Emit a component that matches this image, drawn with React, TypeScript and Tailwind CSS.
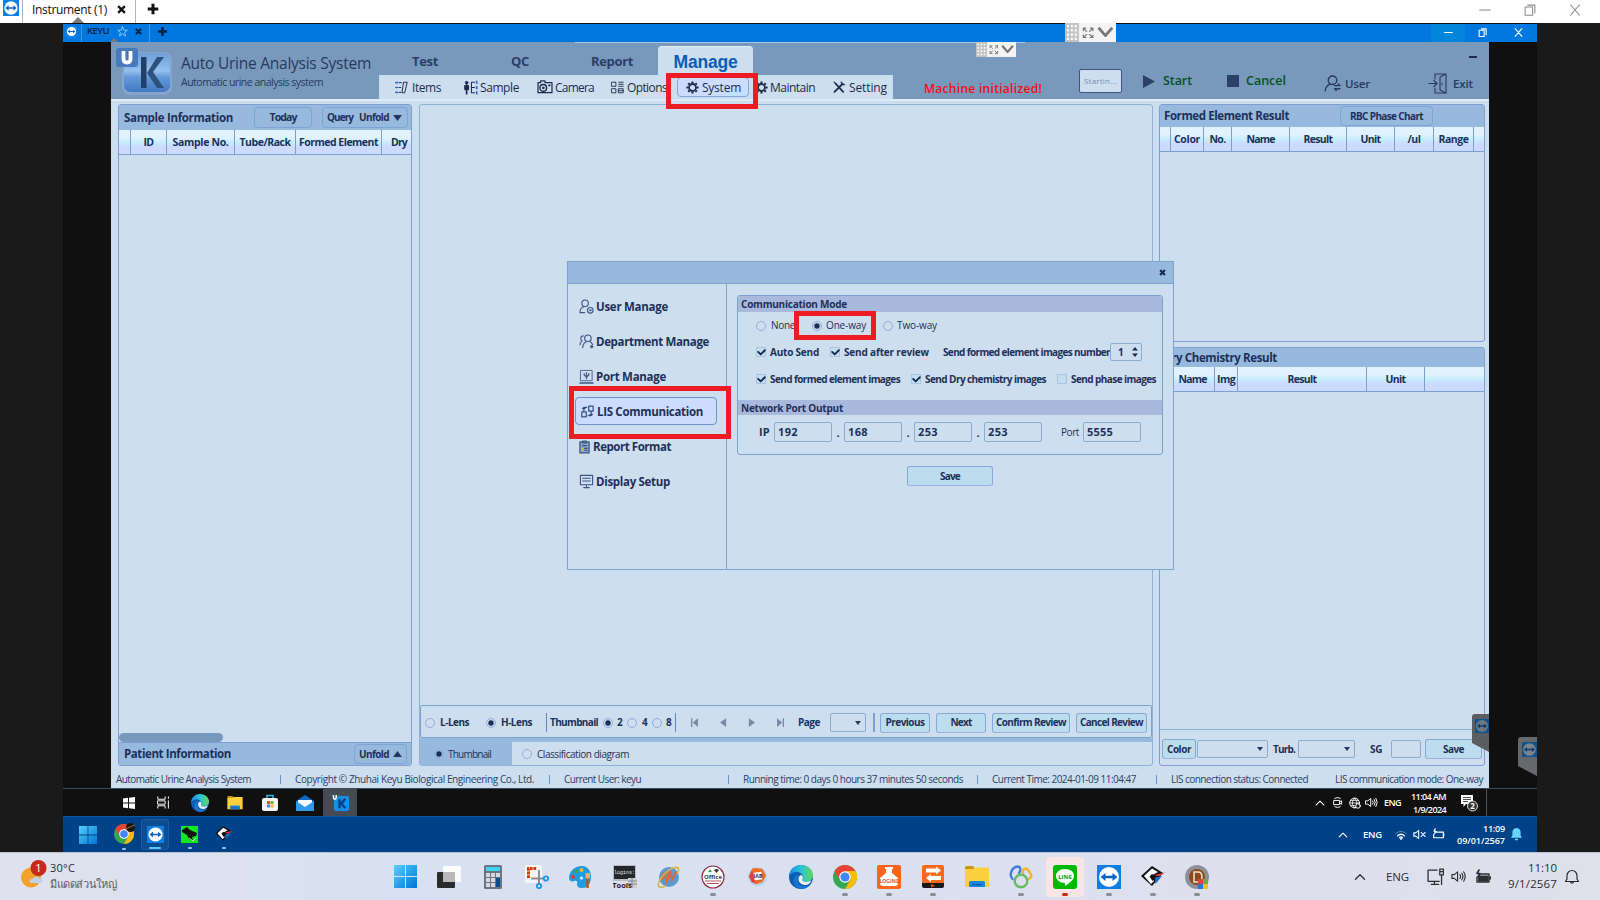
import React, { useLayoutEffect, useRef } from "react";

/* Text set to the exact width of its box by spreading the letter spacing. */
function Fit({ className = "", children }: { className?: string; children: string }) {
  const box = useRef<HTMLSpanElement>(null);
  const inner = useRef<HTMLSpanElement>(null);
  useLayoutEffect(() => {
    if (!box.current || !inner.current) return;
    inner.current.style.letterSpacing = "0px";
    const gap = box.current.getBoundingClientRect().width - inner.current.getBoundingClientRect().width;
    inner.current.style.letterSpacing = `${gap / children.length}px`;
  }, [children]);
  return (
    <span ref={box} className={`block shrink-0 whitespace-nowrap ${className}`}>
      <span ref={inner}>{children}</span>
    </span>
  );
}

type IconProps = { className?: string };
type SvgProps = { className?: string; box?: string; children: React.ReactNode };
function Svg({ className = "", box = "0 0 16 16", children }: SvgProps) {
  return (
    <svg viewBox={box} fill="none" stroke="currentColor" strokeLinecap="round" strokeLinejoin="round" className={`block shrink-0 ${className}`}>
      {children}
    </svg>
  );
}

function Chevron({ className = "" }: IconProps) {
  return (
    <Svg className={className}>
      <path d="M2 11l6-6 6 6" strokeWidth="1.8" />
    </Svg>
  );
}

function Gear({ className = "" }: IconProps) {
  return (
    <Svg className={className}>
      <circle cx="8" cy="8" r="4.3" strokeWidth="2.2" />
      <path d="M8 .5v2.500M8 13v2.500M.5 8H3M13 8h2.500M2.700 2.700l1.700 1.700M11.600 11.600l1.700 1.700M13.300 2.700l-1.700 1.700M4.400 11.600l-1.700 1.700" strokeWidth="2.600" strokeLinecap="butt" />
    </Svg>
  );
}

function TeamViewer({ className = "" }: IconProps) {
  return (
    <svg viewBox="0 0 24 24" className={`block shrink-0 ${className}`}>
      <rect width="24" height="24" fill="#0e7fe0" />
      <circle cx="12" cy="12" r="10" fill="#fff" />
      <path d="M3.500 12l5-4v2.800h7V8l5 4-5 4v-2.800h-7V16z" fill="#0b64c4" />
    </svg>
  );
}

function Windows({ className = "" }: IconProps) {
  return (
    <svg viewBox="0 0 23 23" className={`block shrink-0 ${className}`}>
      <defs>
        <linearGradient id="winfill" x1="0" y1="0" x2="23" y2="23" gradientUnits="userSpaceOnUse">
          <stop offset="0" stopColor="#52d3fb" />
          <stop offset="1" stopColor="#0073d4" />
        </linearGradient>
      </defs>
      <path d="M0 0h11v11H0zM12 0h11v11H12zM0 12h11v11H0zM12 12h11v11H12z" fill="url(#winfill)" />
    </svg>
  );
}

function Chrome({ className = "" }: IconProps) {
  return (
    <svg viewBox="0 0 24 24" className={`block shrink-0 ${className}`}>
      <circle cx="12" cy="12" r="12" fill="#34a853" />
      <path d="M12 0a12 12 0 0 1 10.400 6H12L6.800 15 1.600 6A12 12 0 0 1 12 0z" fill="#ea4335" />
      <path d="M22.400 6A12 12 0 0 1 12 24l5.200-9L17 9l-5-3z" fill="#fbbc05" />
      <circle cx="12" cy="12" r="5.800" fill="#fff" />
      <circle cx="12" cy="12" r="4.600" fill="#4285f4" />
    </svg>
  );
}

function Edge({ className = "" }: IconProps) {
  return (
    <svg viewBox="0 0 24 24" className={`block shrink-0 ${className}`}>
      <defs>
        <linearGradient id="edgetop" x1="0" y1="8" x2="24" y2="8" gradientUnits="userSpaceOnUse">
          <stop offset="0" stopColor="#1d8be0" />
          <stop offset="0.500" stopColor="#2bc3d8" />
          <stop offset="1" stopColor="#62d857" />
        </linearGradient>
      </defs>
      <circle cx="12" cy="12" r="12" fill="#0f5db5" />
      <path d="M0 11C1 4 6 0 12 0c7 0 12 5 12 10 0 4-3 6.500-6.500 6.500-3 0-4.500-1-4-2 1-1.500 1-2.500.5-3.500C13 8.500 10.500 7 7.500 7 4 7 1 9 0 11z" fill="url(#edgetop)" />
      <path d="M9 12c-2 4 0 9 6 9.500 3 .2 5.500-1 7-3C20 22 16.500 24 12 24 6 23 4 18 5 14c.6-2.500 2.500-4 4.500-4.500z" fill="#1679cf" />
      <path d="M9.500 14c0-2.500 1.500-4 3-4 1.500 1 2 3 .9 4.500-.6 1 .9 2.200 4 2.200 2 0 3.600-.6 5-1.700-1 3.500-3 5-6 5-4 0-6.900-2.500-6.900-6z" fill="#e4eef8" />
    </svg>
  );
}

function Folder({ className = "" }: IconProps) {
  return (
    <svg viewBox="0 0 24 22" className={`block shrink-0 ${className}`}>
      <path d="M0 1.500Q0 0 1.500 0H8l2 3H0z" fill="#c89412" />
      <path d="M0 3h8l2-1.500h14V21H0z" fill="#fccf3d" />
      <path d="M4 21v-4.500Q4 15 5.500 15h13q1.500 0 1.500 1.500V21z" fill="#1c86d8" />
      <path d="M7 18h10v1.300H7z" fill="#0a5ba8" />
    </svg>
  );
}

function Diamond({ className = "" }: IconProps) {
  return (
    <svg viewBox="0 0 24 22" className={`block shrink-0 ${className}`}>
      <path d="M11 0l11 7-11 13L0 10z" fill="#111" />
      <path d="M11 2.500L17 6 9.500 10l3.500 5-3 3-7-8z" fill="#fff" />
      <path d="M11 8l4 3-3.500 4-3-4.500z" fill="#111" />
      <path d="M13 9l11-2.500-6 4z" fill="#e2353f" />
      <path d="M14 11.500l7-1.500-6.500 8z" fill="#1f6fc4" />
    </svg>
  );
}

function KLogo({ className = "" }: IconProps) {
  return (
    <svg viewBox="0 0 56 48" className={`block shrink-0 ${className}`}>
      <defs>
        <linearGradient id="klogo" x1="0" y1="5" x2="0" y2="47" gradientUnits="userSpaceOnUse">
          <stop offset="0" stopColor="#6f9cd6" />
          <stop offset="0.450" stopColor="#93c0ec" />
          <stop offset="0.600" stopColor="#6499d8" />
          <stop offset="1" stopColor="#3d74c2" />
        </linearGradient>
      </defs>
      <rect x="6" y="5" width="50" height="43" rx="8" fill="#86a4cc" />
      <rect x="8" y="6" width="46" height="39" rx="7" fill="url(#klogo)" />
      <path d="M25 10h5.500v31H25z" fill="#1f4068" />
      <path d="M41 10h7L37 25l11 16h-7L31 26z" fill="#2c527d" />
      <rect x="0" y="1" width="22" height="19" rx="3" fill="#4879bb" />
      <path d="M7.500 4v8q0 3.500 3.500 3.500t3.500-3.500V4" fill="none" stroke="#fff" strokeWidth="3.800" />
    </svg>
  );
}

function Radio({ on = false, className = "" }: { on?: boolean; className?: string }) {
  return (
    <svg viewBox="0 0 10 10" className={`block size-[10px] shrink-0 ${className}`}>
      <circle cx="5" cy="5" r="4.500" fill="none" stroke="#8fabd9" />
      {on && <circle cx="5" cy="5" r="2.700" fill="#1a2e57" />}
    </svg>
  );
}

function Check({ on = true, className = "" }: { on?: boolean; className?: string }) {
  return (
    <span className={`flex size-[10px] shrink-0 items-center justify-center border border-[#a9c5e2] bg-[#c3dcee] ${className}`}>
      {on && (
        <Svg className="size-[9px] text-[#14284e]">
          <path d="M2 7l4.500 4.500L14 4" strokeWidth="3.200" />
        </Svg>
      )}
    </span>
  );
}

const btn = "flex shrink-0 items-center justify-center rounded-[3px] border border-[#87a9d6] border-b-[#9cafe0] bg-[#bcdded]";
const ghost = "flex shrink-0 items-center rounded-[4px] border border-[#7fa3d3]";
const field = "flex shrink-0 items-center rounded-[2px] border border-[#8badd0]";
const thead = "flex shrink-0 border-b border-[#7b9fd0] bg-linear-to-b from-[#e2f2ff] from-30% via-[#c6eeff] via-50% to-[#ccdaff] to-70% text-[10.500px] font-bold";
const th = "flex shrink-0 items-center justify-center border-r border-[#7b9fcb] pt-[2px]";

function Caret({ className = "" }: IconProps) {
  return (
    <svg viewBox="0 0 10 6" preserveAspectRatio="none" className={`block shrink-0 ${className}`}>
      <path d="M0 0h10L5 6z" fill="#223763" />
    </svg>
  );
}

function FloatTool({ className = "" }: IconProps) {
  return (
    <div className={`absolute flex items-center bg-[#f3f3f3] text-[#777] ${className}`}>
      <svg viewBox="0 0 14 18" className="h-full w-[27%] bg-[#c4c4c4]" preserveAspectRatio="none">
        <path d="M2 3h2M6 3h2M10 3h2M2 7h2M6 7h2M10 7h2M2 11h2M6 11h2M10 11h2M2 15h2M6 15h2M10 15h2" stroke="#fff" strokeWidth="2" />
      </svg>
      <Svg className="mx-[6%] h-[62%] w-[24%]">
        <path d="M10 6l4.500-4.500M11 1.500h3.500V5M6 6L1.500 1.500M5 1.500H1.500V5M10 10l4.500 4.500M11 14.500h3.500V11M6 10l-4.500 4.500M5 14.500H1.500V11" strokeWidth="1.600" />
      </Svg>
      <Svg className="h-full w-[33%]">
        <path d="M1.500 3.500L8 11l6.500-7.500" strokeWidth="2.600" strokeLinecap="butt" />
      </Svg>
    </div>
  );
}

function AppHeader() {
  return (
    <div className="flex h-[57px] shrink-0 border-t border-[#8098b8] bg-[#7899bc] text-[#263a60]">
      <KLogo className="mt-[4px] ml-[5px] h-[48px] w-[56px]" />
      <div className="ml-[9px] w-[198px]">
        <Fit className="mt-[9px] w-[190px] text-[15.500px] leading-[22px]">Auto Urine Analysis System</Fit>
        <Fit className="mt-px w-[142px] text-[10.500px] leading-[15px]">Automatic urine analysis system</Fit>
      </div>
      <div className="w-[514px] shrink-0">
        <div className="flex h-[32px] items-center text-[13px] font-bold text-[#2b3f66]">
          <Fit className="ml-[33px] w-[26px] pt-[5px]">Test</Fit>
          <Fit className="ml-[73px] w-[18px] pt-[5px]">QC</Fit>
          <Fit className="ml-[62px] w-[42px] pt-[5px]">Report</Fit>
          <div className="ml-[25px] flex h-[29px] w-[95px] items-center justify-center self-end rounded-t-[4px] border-t border-[#e0f0fa] bg-[#cddeee] pt-[2px]">
            <Fit className="w-[64px] font-['Liberation_Sans'] text-[17.500px] font-bold text-[#0b5cb8]">Manage</Fit>
          </div>
        </div>
        <div className="flex h-[24px] items-center border border-[#bfe0f2] bg-[#cddeee] text-[12px] text-[#1c2c4e]">
          <Svg className="ml-[15px] h-[13px] w-[13px]">
            <path d="M1 2h2M1 8h2M1 14h2" stroke="#3d66cc" strokeWidth="2" />
            <path d="M5 2h3M5 8h2M5 14h2M11 1.500h4L12 14.500H9z" strokeWidth="1.200" />
          </Svg>
          <Fit className="ml-[4px] w-[29px] pt-px">Items</Fit>
          <Svg className="ml-[23px] h-[15px] w-[14px]">
            <circle cx="3" cy="2.500" r="1.500" fill="currentColor" />
            <path d="M3 5v10M1.200 6v4M4.800 6v4" strokeWidth="2" />
            <path d="M12 2H8.500v12H12M8.500 8H12" strokeWidth="1.200" />
            <path d="M14.500 1v2M14.500 7v2M14.500 13v2" stroke="#3d66cc" strokeWidth="2" />
          </Svg>
          <Fit className="ml-[2px] w-[39px] pt-px">Sample</Fit>
          <Svg box="0 0 18 16" className="ml-[18px] h-[14px] w-[16px]">
            <path d="M1 3h3V1h5v2h8v11.500H1z" strokeWidth="1.400" />
            <circle cx="7" cy="9" r="3.800" strokeWidth="1.600" />
            <circle cx="7" cy="9" r="1" fill="currentColor" />
            <path d="M13.500 6h1" strokeWidth="2" />
          </Svg>
          <Fit className="ml-[2px] w-[39px] pt-px">Camera</Fit>
          <Svg className="ml-[17px] h-[13px] w-[13px]">
            <path d="M1 1.500h5v5H1zM1 9.500h5v5H1zM9.500 1.500H15M9.500 4H15M9.500 6.500H15M9.500 9.500H15v5H9.500zM9.500 12H15" strokeWidth="1.100" />
          </Svg>
          <Fit className="ml-[3px] w-[40px] pt-px">Options</Fit>
          <div className="ml-[10px] flex h-[20px] w-[72px] items-center rounded-[4px] border border-[#88a5d8] bg-[#ccdcff]">
            <Gear className="ml-[8px] size-[13px]" />
            <Fit className="ml-[3px] w-[39px] pt-px">System</Fit>
          </div>
          <Gear className="ml-[6px] size-[13px]" />
          <Fit className="ml-[2px] w-[45px] pt-px">Maintain</Fit>
          <Svg className="ml-[18px] size-[12px]">
            <path d="M2 14.500L12.500 4M4 4l9.500 10.500" strokeWidth="2.400" />
            <path d="M1.500 1.500L4 4M11 1.500L12.500 4l2.500 1" strokeWidth="1.800" />
          </Svg>
          <Fit className="ml-[4px] w-[38px] pt-px">Setting</Fit>
        </div>
      </div>
      <div className="flex flex-1 items-start">
        <Fit className="mt-[36px] ml-[31px] w-[118px] text-[12px] leading-[20px] font-semibold text-[#f40d18]">Machine initialized!</Fit>
        <div className="mt-[26px] ml-[37px] flex h-[24px] w-[43px] items-center justify-center rounded-[2px] border border-[#3b5482] bg-[#cddeee]">
          <Fit className="w-[33px] text-[8px] text-[#7790b8]">Startin...</Fit>
        </div>
        <svg viewBox="0 0 12 13" className="mt-[32px] ml-[21px] h-[13px] w-[12px]">
          <path d="M0 0l12 6.500L0 13z" fill="#2d4068" />
        </svg>
        <Fit className="mt-[28px] ml-[8px] w-[29px] text-[12.500px] leading-[20px] font-semibold text-[#07501f]">Start</Fit>
        <div className="mt-[32px] ml-[35px] size-[12px] bg-[#2d4068]" />
        <Fit className="mt-[28px] ml-[7px] w-[40px] text-[12.500px] leading-[20px] font-semibold text-[#07501f]">Cancel</Fit>
        <Svg className="mt-[32px] ml-[38px] size-[17px]">
          <circle cx="8" cy="5" r="4" strokeWidth="1.300" />
          <path d="M1 15c.5-3 2-5.500 4.500-6.500M10 10h5M13.500 8.500L15 10M15 13h-5M11.500 14.500L10 13" strokeWidth="1.300" />
        </Svg>
        <Fit className="mt-[31px] ml-[4px] w-[25px] text-[11.500px] leading-[20px] font-semibold">User</Fit>
        <Svg box="0 0 19 21" className="mt-[30px] ml-[58px] h-[21px] w-[19px]">
          <path d="M7 6V1h11v19H7v-5M18 1l-6 3v13l6 3M1 10.500h8M6 7.500l3 3-3 3" strokeWidth="1.100" />
          <path d="M14 10v2" />
        </Svg>
        <Fit className="mt-[31px] ml-[6px] w-[20px] text-[11.500px] leading-[20px] font-semibold">Exit</Fit>
        <div className="mt-[13px] -ml-[4px] h-[2px] w-[8px] bg-[#1c2c4e]" />
      </div>
    </div>
  );
}

function LeftPanel() {
  return (
    <div className="ml-[7px] flex h-[662px] w-[294px] shrink-0 flex-col rounded-[3px] border border-[#7f9fd0] text-[#1d3059]">
      <div className="flex h-[25px] shrink-0 items-center bg-[#98b9de] font-bold">
        <Fit className="ml-[5px] w-[109px] text-[11.500px]">Sample Information</Fit>
        <div className={`${ghost} ml-[21px] h-[21px] w-[58px] justify-center`}>
          <Fit className="w-[27px] text-[10.500px]">Today</Fit>
        </div>
        <div className={`${ghost} ml-[10px] h-[21px] w-[86px]`}>
          <Fit className="ml-[4px] w-[26px] text-[10px]">Query</Fit>
          <Fit className="ml-[6px] w-[30px] text-[10px]">Unfold</Fit>
          <Caret className="ml-[4px] h-[6px] w-[9px]" />
        </div>
      </div>
      <div className={`${thead} h-[25px]`}>
        <div className={`${th} w-[12px]`} />
        <div className={`${th} w-[36px]`}><Fit className="w-[10px]">ID</Fit></div>
        <div className={`${th} w-[68px]`}><Fit className="w-[56px]">Sample No.</Fit></div>
        <div className={`${th} w-[61px]`}><Fit className="w-[51px]">Tube/Rack</Fit></div>
        <div className={`${th} w-[86px]`}><Fit className="w-[79px]">Formed Element</Fit></div>
        <div className="flex items-center pt-[2px]"><Fit className="ml-[9px] w-[16px]">Dry</Fit></div>
      </div>
      <div className="flex flex-1 items-end">
        <div className="h-[9px] w-[104px] rounded-full bg-[#7899bc]" />
      </div>
      <div className="flex h-[23px] shrink-0 items-center border-t border-[#7f9fd0] bg-[#98b9de] font-bold">
        <Fit className="ml-[5px] w-[107px] text-[11.500px]">Patient Information</Fit>
        <div className={`${ghost} ml-[123px] h-[20px] w-[53px]`}>
          <Fit className="ml-[4px] w-[30px] text-[10px]">Unfold</Fit>
          <Caret className="ml-[4px] h-[6px] w-[9px] rotate-180" />
        </div>
      </div>
    </div>
  );
}

function PageArrow({ d, className = "" }: { d: string; className?: string }) {
  return (
    <svg viewBox="0 0 8 10" className={`block h-[9px] w-[7px] shrink-0 ${className}`}>
      <path d={d} fill="#7b88a6" />
    </svg>
  );
}

function CenterPanel() {
  return (
    <div className="ml-[7px] flex h-[662px] w-[734px] shrink-0 flex-col rounded-[3px] border border-[#8fb2da] text-[#1d3059]">
      <div className="flex-1" />
      <div className="flex h-[33px] shrink-0 items-center rounded-[2px] border border-[#7ba2cf] pt-[2px] text-[10px] font-bold">
        <Radio className="ml-[4px]" />
        <Fit className="ml-[5px] w-[29px]">L-Lens</Fit>
        <Radio on className="ml-[17px]" />
        <Fit className="ml-[5px] w-[31px]">H-Lens</Fit>
        <div className="ml-[14px] h-[19px] w-px bg-[#5f87bf]" />
        <Fit className="ml-[3px] w-[48px]">Thumbnail</Fit>
        <Radio on className="ml-[5px]" />
        <Fit className="ml-[4px] w-[6px]">2</Fit>
        <Radio className="ml-[4px]" />
        <Fit className="ml-[5px] w-[6px]">4</Fit>
        <Radio className="ml-[4px]" />
        <Fit className="ml-[4px] w-[6px]">8</Fit>
        <div className="ml-[3px] h-[19px] w-px bg-[#5f87bf]" />
        <PageArrow className="ml-[15px]" d="M0 0h1.500v10H0zM8 0v10L2 5z" />
        <PageArrow className="ml-[22px]" d="M7 0v10L0 5z" />
        <PageArrow className="ml-[21px]" d="M1 0v10l7-5z" />
        <PageArrow className="ml-[22px]" d="M0 0v10l6-5zM6.500 0H8v10H6.500z" />
        <Fit className="ml-[14px] w-[22px]">Page</Fit>
        <div className={`${field} ml-[10px] h-[19px] w-[36px] justify-end pr-[4px]`}>
          <Caret className="h-[4px] w-[6px]" />
        </div>
        <div className="ml-[7px] h-[19px] w-[2px] bg-[#7b9fd0]" />
        <div className={`${btn} ml-[5px] h-[20px] w-[50px]`}><Fit className="w-[39px]">Previous</Fit></div>
        <div className={`${btn} ml-[6px] h-[20px] w-[50px]`}><Fit className="w-[21px]">Next</Fit></div>
        <div className={`${btn} ml-[6px] h-[20px] w-[78px]`}><Fit className="w-[70px]">Confirm Review</Fit></div>
        <div className={`${btn} ml-[6px] h-[20px] w-[71px]`}><Fit className="w-[63px]">Cancel Review</Fit></div>
      </div>
      <div className="h-[4px] shrink-0 bg-[#98b9de]" />
      <div className="flex h-[23px] shrink-0 text-[10px]">
        <div className="flex w-[92px] items-center bg-[#98b9de] pt-px">
          <Radio on className="ml-[14px]" />
          <Fit className="ml-[4px] w-[43px]">Thumbnail</Fit>
        </div>
        <div className="flex items-center pt-px">
          <Radio className="ml-[10px]" />
          <Fit className="ml-[5px] w-[92px]">Classification diagram</Fit>
        </div>
      </div>
    </div>
  );
}

function RightPanels() {
  return (
    <div className="ml-[6px] flex w-[326px] flex-col text-[#1d3059]">
      <div className="flex h-[238px] shrink-0 flex-col rounded-[3px] border border-[#7f9fd0]">
        <div className="flex h-[22px] shrink-0 items-center bg-[#98b9de] font-bold">
          <Fit className="ml-[4px] w-[125px] text-[11.500px]">Formed Element Result</Fit>
          <div className={`${ghost} ml-[51px] h-[20px] w-[93px] justify-center`}>
            <Fit className="w-[73px] text-[10px]">RBC Phase Chart</Fit>
          </div>
        </div>
        <div className={`${thead} h-[25px]`}>
          <div className={`${th} w-[11px]`} />
          <div className={`${th} w-[33px]`}><Fit className="w-[26px]">Color</Fit></div>
          <div className={`${th} w-[28px]`}><Fit className="w-[16px]">No.</Fit></div>
          <div className={`${th} w-[58px]`}><Fit className="w-[28px]">Name</Fit></div>
          <div className={`${th} w-[57px]`}><Fit className="w-[29px]">Result</Fit></div>
          <div className={`${th} w-[48px]`}><Fit className="w-[20px]">Unit</Fit></div>
          <div className={`${th} w-[39px]`}><Fit className="w-[13px]">/ul</Fit></div>
          <div className={`${th} w-[40px]`}><Fit className="w-[30px]">Range</Fit></div>
        </div>
      </div>
      <div className="mt-[5px] flex h-[419px] shrink-0 flex-col rounded-[3px] border border-[#7f9fd0]">
        <div className="flex h-[19px] shrink-0 items-center bg-[#98b9de] font-bold">
          <Fit className="ml-[3px] w-[114px] text-[11.500px]">Dry Chemistry Result</Fit>
        </div>
        <div className={`${thead} h-[25px]`}>
          <div className={`${th} w-[11px]`} />
          <div className={`${th} w-[44px]`}><Fit className="w-[28px]">Name</Fit></div>
          <div className={`${th} w-[23px]`}><Fit className="w-[18px]">Img</Fit></div>
          <div className={`${th} w-[129px]`}><Fit className="w-[29px]">Result</Fit></div>
          <div className={`${th} w-[58px]`}><Fit className="w-[20px]">Unit</Fit></div>
        </div>
        <div className="flex-1" />
        <div className="flex h-[36px] shrink-0 items-center border-t border-[#8fb2da] pt-[3px] text-[10px] font-bold">
          <div className={`${btn} ml-[2px] h-[20px] w-[34px]`}><Fit className="w-[24px]">Color</Fit></div>
          <div className={`${field} ml-px h-[18px] w-[71px] justify-end pr-[4px]`}><Caret className="h-[4px] w-[6px]" /></div>
          <Fit className="ml-[5px] w-[22px]">Turb.</Fit>
          <div className={`${field} ml-[3px] h-[18px] w-[57px] justify-end pr-[4px]`}><Caret className="h-[4px] w-[6px]" /></div>
          <Fit className="ml-[15px] w-[12px]">SG</Fit>
          <div className={`${field} ml-[9px] h-[18px] w-[30px]`} />
          <div className={`${btn} ml-[4px] h-[20px] w-[57px]`}><Fit className="w-[21px]">Save</Fit></div>
        </div>
      </div>
    </div>
  );
}

function StatusBar() {
  const bar = "h-[9px] w-px shrink-0 bg-[#6c93cb]";
  return (
    <div className="flex flex-1 items-center pt-[5px] text-[10px] text-[#2a4068]">
      <Fit className="ml-[5px] w-[135px]">Automatic Urine Analysis System</Fit>
      <div className={`${bar} ml-[29px]`} />
      <Fit className="ml-[14px] w-[239px]">Copyright © Zhuhai Keyu Biological Engineering Co., Ltd.</Fit>
      <div className={`${bar} ml-[15px]`} />
      <Fit className="ml-[14px] w-[77px]">Current User: keyu</Fit>
      <div className={`${bar} ml-[87px]`} />
      <Fit className="ml-[14px] w-[220px]">Running time: 0 days 0 hours 37 minutes 50 seconds</Fit>
      <div className={`${bar} ml-[14px]`} />
      <Fit className="ml-[14px] w-[144px]">Current Time: 2024-01-09 11:04:47</Fit>
      <div className={`${bar} ml-[20px]`} />
      <Fit className="ml-[14px] w-[137px]">LIS connection status: Connected</Fit>
      <Fit className="ml-[27px] w-[148px]">LIS communication mode: One-way</Fit>
    </div>
  );
}

function SideItem({ icon, label, w, className = "" }: { icon: React.ReactNode; label: string; w: string; className?: string }) {
  return (
    <div className={`flex h-[35px] items-center ${className}`}>
      {icon}
      <Fit className={w}>{label}</Fit>
    </div>
  );
}

function Dialog() {
  return (
    <div className="absolute top-[261px] left-[567px] flex h-[309px] w-[607px] flex-col border border-[#7da4cf] bg-[#cddeee] text-[#1d3059]">
      <div className="flex h-[22px] shrink-0 items-center justify-end border-b border-[#7da4cf] bg-[#98b9de] pr-[7px]">
        <Svg className="size-[7px] text-[#162a50]">
          <path d="M2.500 2.500l11 11M13.500 2.500l-11 11" strokeWidth="5" strokeLinecap="butt" />
        </Svg>
      </div>
      <div className="flex flex-1">
        <div className="w-[159px] shrink-0 border-r border-[#7da4cf] pt-[5px] text-[11.500px] font-bold">
          <SideItem
            label="User Manage"
            w="ml-[2px] w-[72px]"
            icon={
              <Svg className="ml-[11px] size-[15px] text-[#3d5684]">
                <circle cx="6.500" cy="4.500" r="3.500" strokeWidth="1.200" />
                <path d="M1 14.500c0-3 1.500-5.500 4-6M1 14.500h5" strokeWidth="1.200" />
                <circle cx="12" cy="12" r="3" strokeWidth="1.200" />
                <circle cx="12" cy="12" r=".8" />
              </Svg>
            }
          />
          <SideItem
            label="Department Manage"
            w="ml-[2px] w-[113px]"
            icon={
              <Svg className="ml-[11px] size-[15px] text-[#3d5684]">
                <circle cx="9.500" cy="4.500" r="3.500" strokeWidth="1.200" />
                <path d="M4 14.500c0-3 1-5 3.500-6M11.500 8c1.500.5 2.500 2 3 3.500M4.500 2c-3 0-3.500 4-1.200 5.300C1.500 8.500 1 10 1 11.500" strokeWidth="1.200" />
                <circle cx="13.500" cy="13.500" r="1.200" fill="currentColor" />
              </Svg>
            }
          />
          <SideItem
            label="Port Manage"
            w="ml-[2px] w-[70px]"
            icon={
              <Svg className="ml-[11px] size-[15px] text-[#3d5684]">
                <path d="M2 1.500h12v11H2z" strokeWidth=".9" />
                <path d="M1 15h14" strokeWidth="1.500" />
                <path d="M8 4v6.500M5.500 5v1.500L8 8.500l2.500-2V5" strokeWidth="1.300" />
              </Svg>
            }
          />
          <div className="mt-[3px] ml-[7px] flex h-[28px] w-[142px] items-center rounded-[4px] border border-[#6f94c8] bg-[#ccdcff] pt-px">
            <Svg className="ml-[5px] size-[13px] text-[#34507f]">
              <path d="M1 8.500h5.500v6H1zM9.500 1.500H15v6H9.500zM3.500 8V3H7M12.500 8v5H9M2 4.500L3.500 3 5 4.500M11 11.500l1.500 1.500 1.500-1.500" strokeWidth="1.500" />
            </Svg>
            <Fit className="ml-[3px] w-[106px]">LIS Communication</Fit>
          </div>
          <SideItem
            className="mt-[4px]"
            label="Report Format"
            w="ml-[3px] w-[78px]"
            icon={
              <Svg box="0 0 12 15" className="ml-[11px] h-[14px] w-[11px] text-[#3d5684]">
                <path d="M1 2h10v12H1z" strokeWidth="1.400" fill="#8ea6c8" />
                <path d="M4 1h4v2H4zM3.500 6h5M6 9h3M6 11h3" strokeWidth="1.200" />
                <path d="M3.500 9v2" stroke="#e8c13a" strokeWidth="1.600" />
              </Svg>
            }
          />
          <SideItem
            label="Display Setup"
            w="ml-[2px] w-[74px]"
            icon={
              <Svg className="ml-[11px] size-[15px] text-[#3d5684]">
                <path d="M1.500 1.500h13v10h-13zM4 4.500h8M4 7.500h8M8 12v2M5 14.500h6" strokeWidth="1.200" />
              </Svg>
            }
          />
        </div>
        <div className="flex-1 pt-[11px] pl-[10px]">
          <div className="flex h-[160px] w-[426px] flex-col rounded-[3px] border border-[#7ba2cf] text-[10px] font-bold">
            <div className="flex h-[16px] shrink-0 items-center bg-[#a9b9dd] pt-px">
              <Fit className="ml-[3px] w-[106px]">Communication Mode</Fit>
            </div>
            <div className="mt-[4px] flex h-[19px] items-center font-normal">
              <Radio className="ml-[18px]" />
              <Fit className="ml-[5px] w-[24px]">None</Fit>
              <Radio on className="ml-[17px]" />
              <Fit className="ml-[4px] w-[40px]">One-way</Fit>
              <Radio className="ml-[17px]" />
              <Fit className="ml-[4px] w-[40px]">Two-way</Fit>
            </div>
            <div className="mt-[7px] flex h-[20px] items-center">
              <Check className="ml-[18px]" />
              <Fit className="ml-[4px] w-[49px]">Auto Send</Fit>
              <Check className="ml-[11px]" />
              <Fit className="ml-[4px] w-[85px]">Send after review</Fit>
              <Fit className="ml-[14px] w-[167px]">Send formed element images number</Fit>
              <div className={`${field} h-[18px] w-[32px]`}>
                <Fit className="ml-[7px] w-[6px] text-[10px]">1</Fit>
                <svg viewBox="0 0 6 10" className="ml-[8px] h-[10px] w-[6px]">
                  <path d="M0 3.500h6L3 0zM0 6.500h6L3 10z" fill="#162a50" />
                </svg>
              </div>
            </div>
            <div className="mt-[7px] flex h-[20px] items-center">
              <Check className="ml-[18px]" />
              <Fit className="ml-[4px] w-[130px]">Send formed element images</Fit>
              <Check className="ml-[11px]" />
              <Fit className="ml-[4px] w-[121px]">Send Dry chemistry images</Fit>
              <Check on={false} className="ml-[11px]" />
              <Fit className="ml-[4px] w-[85px]">Send phase images</Fit>
            </div>
            <div className="mt-[11px] flex h-[15px] shrink-0 items-center bg-[#a9b9dd] pt-px">
              <Fit className="ml-[3px] w-[102px]">Network Port Output</Fit>
            </div>
            <div className="mt-[7px] flex h-[20px] items-center text-[11px]">
              <Fit className="ml-[21px] w-[11px]">IP</Fit>
              <div className={`${field} ml-[4px] h-[20px] w-[58px]`}><Fit className="ml-[3px] w-[20px]">192</Fit></div>
              <span className="w-[12px] pt-[3px] text-center">.</span>
              <div className={`${field} h-[20px] w-[58px]`}><Fit className="ml-[3px] w-[20px]">168</Fit></div>
              <span className="w-[12px] pt-[3px] text-center">.</span>
              <div className={`${field} h-[20px] w-[58px]`}><Fit className="ml-[3px] w-[20px]">253</Fit></div>
              <span className="w-[12px] pt-[3px] text-center">.</span>
              <div className={`${field} h-[20px] w-[58px]`}><Fit className="ml-[3px] w-[20px]">253</Fit></div>
              <Fit className="ml-[19px] w-[18px] text-[10px] font-normal">Port</Fit>
              <div className={`${field} ml-[4px] h-[20px] w-[58px]`}><Fit className="ml-[3px] w-[26px]">5555</Fit></div>
            </div>
          </div>
          <div className={`${btn} mt-[11px] ml-[170px] h-[20px] w-[86px] text-[10px] font-bold`}>
            <Fit className="w-[20px]">Save</Fit>
          </div>
        </div>
      </div>
    </div>
  );
}

function InnerTaskbar() {
  return (
    <div className="flex h-[28px] shrink-0 items-center border-t border-[#3a4a5c] bg-[#101010] pl-[60px] text-white">
      <svg viewBox="0 0 12 12" className="size-[12px]">
        <path d="M0 1.500L5 .8v4.700H0zM6 .7L12 0v5.500H6zM0 6.500h5v4.700l-5-.7zM6 6.500h6V12l-6-.8z" fill="#fff" />
      </svg>
      <Svg className="ml-[22px] h-[13px] w-[13px]">
        <path d="M1 1v3h9V1M1 15v-3h9v3M1 6h9v4H1zM14 1v2M14 6v9" strokeWidth="1.200" />
      </Svg>
      <Edge className="ml-[21px] size-[18px]" />
      <Folder className="ml-[18px] h-[14px] w-[16px]" />
      <svg viewBox="0 0 18 18" className="ml-[18px] size-[18px]">
        <path d="M6 4V1.500h6V4" fill="none" stroke="#2fb8e8" strokeWidth="1.500" />
        <rect x="1" y="4" width="16" height="13" rx="2" fill="#f4f4f4" />
        <path d="M6 7h3v3H6z" fill="#e8502f" />
        <path d="M9.500 7h3v3h-3z" fill="#6fb52b" />
        <path d="M6 10.500h3v3H6z" fill="#1f9fe0" />
        <path d="M9.500 10.500h3v3h-3z" fill="#f7b71d" />
      </svg>
      <svg viewBox="0 0 18 16" className="ml-[17px] h-[16px] w-[18px]">
        <path d="M0 6l9-6 9 6v10H0z" fill="#0f66c4" />
        <path d="M2 5h14v7H2z" fill="#f3f8fd" />
        <path d="M0 6l9 6 9-6v10H0z" fill="#2f9be8" />
      </svg>
      <div className="ml-[9px] flex h-[28px] w-[34px] items-center justify-center bg-[#454b52]">
        <svg viewBox="0 0 18 18" className="size-[17px]">
          <rect x="2" y="2" width="16" height="16" rx="2" fill="#1590e8" />
          <path d="M8 5v10M14 5l-4 5 4 5" stroke="#0b3c78" strokeWidth="2.400" fill="none" />
          <path d="M1.500 1v3q0 1.500 1.500 1.500T4.500 4V1" stroke="#fff" strokeWidth="1.500" fill="none" />
        </svg>
      </div>
      <Chevron className="ml-[958px] size-[10px]" />
      <Svg className="ml-[7px] size-[11px]">
        <path d="M3 5h8v6H3zM11 7l3-1.500v5L11 9M4 2c2-1.500 6-1.500 8 0M4 14c2 1.500 6 1.500 8 0" strokeWidth="1.400" />
      </Svg>
      <Svg className="ml-[6px] size-[12px]">
        <circle cx="7.500" cy="8" r="6.500" strokeWidth="1.300" />
        <path d="M1 8h13M7.500 1.500c-4 4-4 9 0 13M7.500 1.500c4 4 4 9 0 13M2.500 4.500h10M2.500 11.500h5" strokeWidth="1.100" />
        <circle cx="12" cy="12" r="3" strokeWidth="1.300" fill="#101010" />
      </Svg>
      <Speaker className="ml-[4px] size-[13px]" />
      <Fit className="ml-[6px] w-[17px] text-[9px] font-semibold">ENG</Fit>
      <div className="ml-[10px] flex flex-col items-end text-[9px] leading-[13px] font-semibold">
        <Fit className="w-[35px]">11:04 AM</Fit>
        <Fit className="w-[33px]">1/9/2024</Fit>
      </div>
      <svg viewBox="0 0 18 18" className="ml-[14px] size-[18px]">
        <path d="M1 1h12v9H6l-2.500 3v-3H1z" fill="#fff" />
        <path d="M3 3.500h8M3 5.500h8M3 7.500h5" stroke="#222" strokeWidth=".8" />
        <circle cx="12.500" cy="12" r="5" fill="#333" stroke="#eee" strokeWidth=".9" />
        <text x="12.500" y="14.800" fontSize="8" fontWeight="700" fill="#fff" textAnchor="middle">2</text>
      </svg>
      <div className="ml-[8px] h-[27px] w-px bg-[#555]" />
    </div>
  );
}

function Speaker({ className = "" }: IconProps) {
  return (
    <Svg className={className}>
      <path d="M1 6h2.500L7 3v10l-3.500-3H1zM9.500 6q1.500 2 0 4M11.500 4.500q2.500 3.500 0 7M13.500 3q3.300 5 0 10" strokeWidth="1.200" />
    </Svg>
  );
}

function MiddleTaskbar() {
  return (
    <div className="flex h-[36px] shrink-0 items-center border-t border-[#0a5aa8] bg-[#004287] text-white">
      <Windows className="ml-[16px] size-[18px]" />
      <div className="ml-[16px] flex h-full w-[21px] flex-col items-center pt-[7px]">
        <div className="relative">
          <Chrome className="size-[20px]" />
          <svg viewBox="0 0 12 12" className="absolute -top-[2px] -right-[2px] size-[12px]">
            <circle cx="6.500" cy="5.500" r="4.500" fill="#1c1610" />
            <path d="M1 7l10-4" stroke="#8c6b3f" />
          </svg>
        </div>
        <div className="mt-[4px] h-[2px] w-[4px] rounded-full bg-[#9cc3ea]" />
      </div>
      <div className="ml-[7px] flex h-[31px] w-[28px] flex-col items-center rounded-[3px] border border-[#1f5c9c] bg-[#0c4d92] pt-[6px]">
        <TeamViewer className="size-[17px]" />
        <div className="mt-[4px] h-[2px] w-[12px] rounded-full bg-[#5fc5f5]" />
      </div>
      <div className="ml-[12px] flex h-full w-[17px] flex-col items-center pt-[9px]">
        <svg viewBox="0 0 17 17" className="size-[17px]">
          <rect width="17" height="17" fill="#12e818" />
          <path d="M1 4l5-3 3 3 7 3-1 3-4 1 1 4-4-2-2-4-5-3z" fill="#111" />
          <path d="M8 12l4 3 3-3" stroke="#ddd" fill="none" />
        </svg>
        <div className="mt-[4px] h-[2px] w-[4px] rounded-full bg-[#9cc3ea]" />
      </div>
      <div className="ml-[17px] flex h-full w-[18px] flex-col items-center pt-[9px]">
        <Diamond className="h-[16px] w-[18px]" />
        <div className="mt-[5px] h-[2px] w-[4px] rounded-full bg-[#9cc3ea]" />
      </div>
      <Chevron className="ml-[1105px] size-[10px]" />
      <Fit className="ml-[15px] w-[19px] pt-px text-[9.500px] font-semibold">ENG</Fit>
      <Svg className="ml-[13px] size-[12px]">
        <path d="M1 6q7-6 14 0" strokeWidth="1.200" opacity=".4" />
        <path d="M3.500 9q4.500-4 9 0M6 11.500q2-2 4 0" strokeWidth="1.800" />
        <circle cx="8" cy="13" r="1" fill="currentColor" />
      </Svg>
      <Svg className="ml-[6px] size-[13px]">
        <path d="M1 6h2.500L7 3v10l-3.500-3H1zM10 5.500l5 5M15 5.500l-5 5" strokeWidth="1.300" />
      </Svg>
      <Svg className="ml-[6px] size-[13px]">
        <path d="M4 5h10v7H2V8M14.500 7.500v2M4 1L2.500 4H5L3 7" strokeWidth="1.500" />
      </Svg>
      <div className="ml-[12px] flex w-[48px] flex-col items-end text-[9px] leading-[12px] font-semibold">
        <Fit className="w-[22px]">11:09</Fit>
        <Fit className="w-[48px]">09/01/2567</Fit>
      </div>
      <svg viewBox="0 0 12 14" className="ml-[6px] h-[13px] w-[11px]">
        <path d="M6 0a4.500 4.500 0 0 1 4.500 4.500V8L12 10.500H0L1.500 8V4.500A4.500 4.500 0 0 1 6 0zM4 11.500h4a2 2 0 0 1-4 0z" fill="#66d4fb" />
      </svg>
    </div>
  );
}

function Slot({ children, dot = "", className = "" }: { children: React.ReactNode; dot?: string; className?: string }) {
  return (
    <div className={`flex h-[40px] w-[38px] shrink-0 flex-col items-center rounded-[4px] pt-[8px] ${className}`}>
      <div className="flex h-[24px] items-center">{children}</div>
      {dot && <div className={`mt-[4px] h-[3px] w-[6px] rounded-full ${dot}`} />}
    </div>
  );
}

function OuterTaskbar() {
  const gray = "bg-[#8b8d94]";
  return (
    <div className="flex h-[48px] shrink-0 items-center border-t border-[#b9c3d4] bg-linear-to-r from-[#dfe1ee] via-[#d8e1f1] via-25% to-[#e0dfec] text-[#2b2d33]">
      <svg viewBox="0 0 28 28" className="-mt-[5px] ml-[20px] size-[28px]">
        <circle cx="11" cy="17.500" r="10" fill="#f3a02c" />
        <path d="M10 23q-2-4 2.500-4 3-4.500 6.500-1 4.500.5 3 5z" fill="#bfd0ec" />
        <circle cx="18.500" cy="8" r="8" fill="#c42b1c" />
        <text x="18.500" y="12" fontSize="11" fill="#fff" textAnchor="middle">1</text>
      </svg>
      <div className="-mt-[2px] ml-[2px] w-[300px]">
        <Fit className="w-[25px] text-[11px] leading-[16px]">30°C</Fit>
        <Fit className="w-[65px] text-[11px] leading-[16px] text-[#5b5d64]">มีแดดส่วนใหญ่</Fit>
      </div>
      <div className="ml-[36px] flex gap-[6px]">
        <Slot><Windows className="size-[23px]" /></Slot>
        <Slot>
          <svg viewBox="0 0 24 24" className="size-[24px]">
            <rect x="0" y="7" width="18" height="16" rx="1" fill="#2b2b2b" />
            <rect x="6" y="1" width="18" height="16" rx="1" fill="#fbfbfb" />
            <path d="M6 7h12v10H6z" fill="#b9b9b9" />
          </svg>
        </Slot>
        <Slot>
          <svg viewBox="0 0 18 24" className="h-[24px] w-[18px]">
            <rect width="18" height="24" rx="1.500" fill="#6b7480" />
            <rect x="2" y="2" width="14" height="4" fill="#3fd3f7" />
            <path d="M2 8h4v4H2zM7 8h4v4H7zM12 8h4v4h-4zM2 13h4v4H2zM7 13h4v4H7zM2 18h4v4H2zM7 18h4v4H7z" fill="#d6dae0" />
            <path d="M12 13h4v9h-4z" fill="#0d4a94" />
          </svg>
        </Slot>
        <Slot>
          <svg viewBox="0 0 24 24" className="size-[24px]">
            <rect width="17" height="18" rx="2" fill="#f6f6f6" />
            <path d="M3.500 13V3.500H12" fill="none" stroke="#d83b01" strokeWidth="3" strokeDasharray="2.800 .8" />
            <path d="M14 5v13M6 13.500h12" stroke="#888e98" strokeWidth="2" />
            <circle cx="21" cy="13.500" r="2.200" fill="none" stroke="#1d95e0" strokeWidth="1.800" />
            <circle cx="14" cy="21" r="2.200" fill="none" stroke="#1d95e0" strokeWidth="1.800" />
          </svg>
        </Slot>
        <Slot>
          <svg viewBox="0 0 24 24" className="size-[24px]">
            <path d="M13 1C5 1 0 7 0 13c0 3 3 4 5 3s4 0 3 3c0 3 2 4 5 4 6 0 9-5 9-11S19 1 13 1z" fill="#1f9be4" />
            <circle cx="7" cy="6.500" r="2" fill="#3ba53f" />
            <circle cx="12.500" cy="5" r="2" fill="#f6b71b" />
            <circle cx="4" cy="12" r="2" fill="#d8412f" />
            <circle cx="12.500" cy="13" r="1.600" fill="#e9f4fb" />
            <path d="M18.500 13v10" stroke="#a65c20" strokeWidth="2.500" />
            <path d="M16.500 8h4.500v5.500h-4.500z" fill="#e0b27a" />
          </svg>
        </Slot>
        <Slot>
          <svg viewBox="0 0 24 24" className="size-[24px]">
            <rect width="23" height="16" fill="#b9bcc0" />
            <rect x="1" y="1" width="21" height="13" fill="#22292c" />
            <text x="11.500" y="9" fontSize="5" fill="#e8e8e8" textAnchor="middle" fontFamily="Liberation Mono">logins:</text>
            <path d="M15 13h9v10h-9z" fill="#cfcfcf" />
            <path d="M15 16h9M15 19h9M19 13v10" stroke="#888" />
            <text x="9" y="22.500" fontSize="7.500" fontWeight="700" fill="#222" textAnchor="middle">Tools</text>
          </svg>
        </Slot>
        <Slot>
          <svg viewBox="0 0 24 24" className="size-[24px]">
            <circle cx="12" cy="12" r="10" fill="#5b9ad2" />
            <path d="M5 15l3-6 2 8 3-10 2 8 4-8M5 10l6-3" stroke="#e3682f" strokeWidth="2" fill="none" />
            <path d="M2 22C-1 18 8 6 16 3c6-2 7 1 4 6M2 22q3 1 6-1" stroke="#d9b24c" strokeWidth="1.600" fill="none" />
          </svg>
        </Slot>
        <Slot dot={gray}>
          <svg viewBox="0 0 24 24" className="size-[24px]">
            <circle cx="12" cy="12" r="11" fill="#fff" stroke="#8c2f48" strokeWidth="1.200" />
            <path d="M7 7l2-3 2 3z" fill="#3fa344" />
            <path d="M13 5q3-2 5 0l-2.500 3z" fill="#333" />
            <text x="12" y="13.500" fontSize="6" fontWeight="700" fill="#1d3c63" textAnchor="middle">Office</text>
            <path d="M4 16h16M6 18.500h12" stroke="#b5525f" />
          </svg>
        </Slot>
        <Slot>
          <svg viewBox="0 0 22 22" className="size-[21px]">
            <circle cx="11" cy="11" r="10" fill="#b8d2ea" />
            <path d="M6 2l10 1 4 7-4 7-7 2-6-7z" fill="#ef6c23" />
            <path d="M5 4l4 14-4-1-3-6z" fill="#e23f35" />
            <path d="M7 7l8-1 1 8-8 1z" fill="#fff" />
            <text x="11.500" y="13" fontSize="5.500" fontWeight="700" fill="#333" textAnchor="middle">IAB</text>
          </svg>
        </Slot>
        <Slot><Edge className="size-[24px]" /></Slot>
        <Slot dot={gray}><Chrome className="size-[24px]" /></Slot>
        <Slot dot={gray}>
          <svg viewBox="0 0 24 24" className="size-[24px]">
            <rect width="24" height="24" rx="2" fill="#fb641c" />
            <path d="M8 2h8v2h-1v4l6 5v5q0 3-3 3H6q-3 0-3-3v-5l6-5V4H8z" fill="#fff" />
            <text x="12" y="17.500" fontSize="5" fontWeight="700" fill="#e2531b" textAnchor="middle">LOGINS</text>
          </svg>
        </Slot>
        <Slot dot={gray}>
          <svg viewBox="0 0 24 24" className="size-[24px]">
            <rect x="1" width="22" height="22" rx="2" fill="#fa6a1a" />
            <path d="M1 18h22v3q0 2-2 2H3q-2 0-2-2z" fill="#181818" />
            <path d="M5 3.500h10V1.500l5 4-5 4V7.500H5zM20 11H10V9l-5 4 5 4v-2h10z" fill="#fff" />
            <path d="M10 19l4 1.500-4 2z" fill="#e2531b" />
          </svg>
        </Slot>
        <Slot><Folder className="h-[22px] w-[24px]" /></Slot>
        <Slot dot={gray}>
          <svg viewBox="0 0 24 24" className="size-[24px]" fill="none" strokeWidth="2.400" strokeLinecap="round">
            <path d="M3.500 14C-.5 10 3 2 8.500 1.500c3.500 0 3.500 4 1.500 6.500" stroke="#3d7fe0" />
            <path d="M14 8c-1-4 3-6 5-3 3.500 4 5 7 1 9" stroke="#f5b32c" />
            <circle cx="12" cy="16" r="6.300" stroke="#69bb63" />
          </svg>
        </Slot>
        <Slot dot="bg-[#c42b1c]" className="bg-[#fbe4e6]">
          <svg viewBox="0 0 24 24" className="size-[24px]">
            <rect width="24" height="24" rx="3" fill="#00b900" />
            <path d="M12 4c5.500 0 9 3.200 9 7 0 4-5 7-9 10v-3c-5 0-9-3-9-7s3.500-7 9-7z" fill="#fff" />
            <text x="12" y="13.500" fontSize="6" fontWeight="700" fill="#00a000" textAnchor="middle">LINE</text>
          </svg>
        </Slot>
        <Slot dot={gray}><TeamViewer className="size-[24px]" /></Slot>
        <Slot dot={gray}><Diamond className="h-[22px] w-[24px]" /></Slot>
        <Slot dot={gray}>
          <svg viewBox="0 0 24 24" className="size-[24px]">
            <circle cx="12" cy="12" r="12" fill="#8d9096" />
            <circle cx="12" cy="12" r="8" fill="#8a4a1c" />
            <path d="M9 7h4q4 0 4 5t-4 5H9z" fill="none" stroke="#f3e3cf" strokeWidth="1.500" />
            <path d="M13 14h5v5h-5z" fill="#e0452f" />
            <path d="M18 14h5v5h-5z" fill="#67b13a" />
            <path d="M13 19h5v5h-5z" fill="#2d75d0" />
            <path d="M18 19h5v5h-5z" fill="#f2bd2c" />
          </svg>
        </Slot>
      </div>
      <Chevron className="ml-[138px] size-[12px]" />
      <Fit className="ml-[20px] w-[23px] text-[11.500px]">ENG</Fit>
      <Svg className="ml-[18px] size-[17px]">
        <path d="M9.500 2H1v10.500h10.500M7 12.500v3M4 15.500h7M12 1h3.500v5.500H12zM13.700 6.500v9M12 3.500h3.500" strokeWidth="1.200" />
      </Svg>
      <Speaker className="ml-[7px] size-[15px]" />
      <Svg className="ml-[9px] size-[16px]">
        <path d="M4 5h10v8H2V8M15.300 8v2" strokeWidth="1.400" />
        <path d="M4 7h9v5H4z" fill="currentColor" />
        <path d="M4 1L2 4.500h3L3 8" strokeWidth="1.600" />
      </Svg>
      <div className="-mt-px ml-[17px] flex w-[49px] flex-col items-end text-[11.500px] leading-[16px]">
        <Fit className="w-[29px]">11:10</Fit>
        <Fit className="w-[49px]">9/1/2567</Fit>
      </div>
      <Svg className="ml-[7px] size-[16px]">
        <path d="M8 1.500a5 5 0 0 1 5 5V10l1.500 2.500h-13L3 10V6.500a5 5 0 0 1 5-5zM6.500 13a1.600 1.600 0 0 0 3 0" strokeWidth="1.200" />
      </Svg>
    </div>
  );
}

export default function App() {
  return (
    <div className="relative flex h-[900px] w-[1600px] flex-col overflow-hidden bg-[#1a1a1a] font-['Open_Sans','Noto_Sans',sans-serif]">
      <div className="flex h-[23px] shrink-0 items-center bg-white text-[#111]">
        <TeamViewer className="-mt-[8px] ml-[3px] size-[16px]" />
        <div className="ml-[3px] h-full w-px bg-[#b5b5b5]" />
        <Fit className="-mt-[4px] ml-[9px] w-[75px] text-[12px]">Instrument (1)</Fit>
        <Svg className="-mt-[5px] ml-[10px] size-[9px]"><path d="M2 2l12 12M14 2L2 14" strokeWidth="4" strokeLinecap="butt" /></Svg>
        <div className="ml-[9px] h-full w-px bg-[#b5b5b5]" />
        <Svg className="-mt-[5px] ml-[11px] size-[12px]"><path d="M8 1v14M1 8h14" strokeWidth="4" strokeLinecap="butt" /></Svg>
        <div className="ml-auto flex items-center gap-[33px] pr-[19px] text-[#8a8a8a]">
          <Svg className="-mt-[3px] size-[12px]"><path d="M1 8h14" strokeWidth="1.500" /></Svg>
          <Svg className="-mt-[3px] size-[12px]"><path d="M1.500 4h10v11h-10zM5 1.500h9.500V12" strokeWidth="1.400" /></Svg>
          <Svg className="-mt-[3px] size-[12px]"><path d="M2 1l12 14M14 1L2 15" strokeWidth="1.400" /></Svg>
        </div>
      </div>
      <div className="flex h-[829px] shrink-0 px-[63px]">
        <div className="flex w-[1474px] flex-col bg-[#101010] pt-px">
          <div className="flex h-[18px] shrink-0 items-center bg-[#0078df] pb-[4px] text-[#06203f]">
            <TeamViewer className="ml-[3px] size-[11px]" />
            <div className="-mb-[4px] ml-[4px] h-[18px] w-px bg-[#3b9bea]" />
            <Fit className="ml-[5px] w-[22px] text-[9.500px] font-semibold">KEYU</Fit>
            <Svg className="ml-[8px] size-[11px] text-[#8cc6f5]">
              <path d="M8 1l2 5h5l-4 3.300 1.500 5.200L8 11.500l-4.500 3L5 9.300 1 6h5z" strokeWidth="1.400" />
            </Svg>
            <Svg className="ml-[7px] size-[7px]"><path d="M2 2l12 12M14 2L2 14" strokeWidth="4.500" strokeLinecap="butt" /></Svg>
            <div className="-mb-[4px] ml-[7px] h-[18px] w-px bg-[#3b9bea]" />
            <Svg className="ml-[8px] size-[9px]"><path d="M8 0v16M0 8h16" strokeWidth="4.500" strokeLinecap="butt" /></Svg>
            <div className="-mb-[4px] ml-auto flex h-[18px] w-[34px] items-center justify-center bg-[#0087dc] pb-[2px] text-white">
              <Svg className="size-[9px]"><path d="M1 8h14" strokeWidth="2" /></Svg>
            </div>
            <Svg className="mt-[2px] ml-[13px] size-[9px] text-white"><path d="M2 4h9v11H2zM6 1.500h8.500V12" strokeWidth="2" /></Svg>
            <Svg className="mt-[2px] mr-[14px] ml-[27px] size-[9px] text-white"><path d="M2 1l12 14M14 1L2 15" strokeWidth="1.800" /></Svg>
          </div>
          <div className="ml-[48px] flex h-[746px] w-[1378px] shrink-0 flex-col bg-[#cddeee]">
            <AppHeader />
            <div className="h-[2px] shrink-0 bg-[#dcebf5]" />
            <div className="flex h-[665px] shrink-0 pt-[3px]">
              <LeftPanel />
              <CenterPanel />
              <RightPanels />
            </div>
            <StatusBar />
          </div>
          <InnerTaskbar />
          <MiddleTaskbar />
        </div>
      </div>
      <OuterTaskbar />

      <Dialog />

      <div className="absolute top-[42px] left-[575px] h-px w-[450px] bg-[#a9c7e6]" />
      <svg viewBox="0 0 12 6" className="absolute top-[17px] left-[72px] h-[6px] w-[12px]"><path d="M0 6l6-6 6 6z" fill="#7a7a7a" /></svg>
      <svg viewBox="0 0 8 4" className="absolute top-[38px] left-[110px] h-[4px] w-[8px]"><path d="M0 4l4-4 4 4z" fill="#7a7a7a" /></svg>
      <FloatTool className="top-[23px] left-[1065px] h-[19px] w-[51px]" />
      <FloatTool className="top-[42px] left-[976px] h-[15px] w-[40px]" />

      <svg viewBox="0 0 17 38" className="absolute top-[714px] left-[1472px] h-[38px] w-[17px]">
        <path d="M0 3q0-3 3-3h14v38L0 29z" fill="#5b5d60" />
        <rect x="3" y="5" width="14" height="14" fill="#0c5490" />
        <circle cx="10" cy="12" r="6" fill="#6f7881" />
        <path d="M5 12l3-2.500v1.700h4V9.500l3 2.500-3 2.500v-1.700H8v1.700z" fill="#0c3f70" />
      </svg>
      <svg viewBox="0 0 19 39" className="absolute top-[737px] left-[1518px] h-[39px] w-[19px]">
        <path d="M0 3q0-3 3-3h16v39L0 29z" fill="#66686b" />
        <rect x="4" y="5" width="15" height="15" fill="#0c5490" />
        <circle cx="11.500" cy="12.500" r="6.300" fill="#7b848d" />
        <path d="M6 12.500l3-2.500v1.700h5V10l3 2.500-3 2.500v-1.700H9V15z" fill="#0c3f70" />
      </svg>

      <div className="absolute top-[73px] left-[666px] h-[36px] w-[92px] border-[5px] border-[#ed1c24]" />
      <div className="absolute top-[386px] left-[569px] h-[53px] w-[162px] border-[5px] border-[#ed1c24]" />
      <div className="absolute top-[311px] left-[794px] h-[29px] w-[82px] border-[5px] border-[#ed1c24]" />
    </div>
  );
}
